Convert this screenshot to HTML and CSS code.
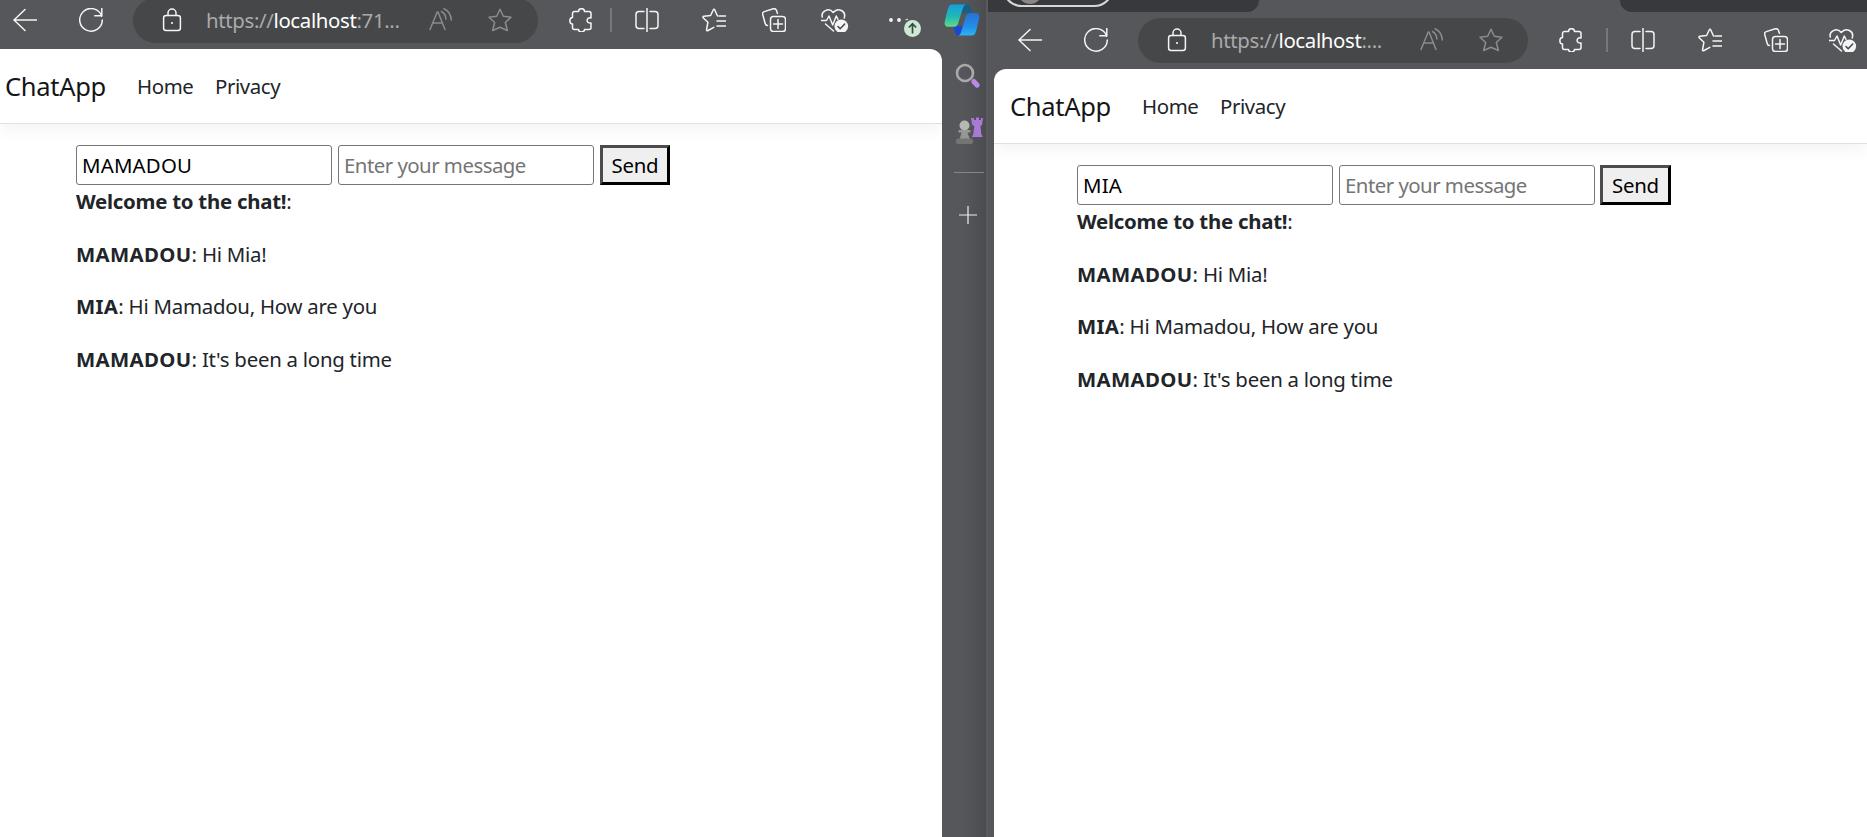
FILE: index.html
```
<!DOCTYPE html>
<html lang="en">
<head>
<meta charset="utf-8">
<title>ChatApp</title>
<link rel="stylesheet" href="styles.css">
</head>
<body>
<svg class="defs" aria-hidden="true">
  <symbol id="back" viewBox="0 0 24 24"><path d="M24 12H.8M12 1.500 1 12l11 10.500"/></symbol>
  <symbol id="reload" viewBox="0 0 24 24"><path d="M22.700 8.200A11.300 11.300 0 1 0 23.300 12M22.800.5v7.200h-7"/></symbol>
  <symbol id="lock" viewBox="0 0 24 24"><rect x="3.600" y="7.500" width="16.800" height="15" rx="2.500"/><path d="M8 7.500V5a4 4 0 0 1 8 0v2.500"/><circle cx="12" cy="15" r="1.100" class="solid"/></symbol>
  <symbol id="read" viewBox="0 0 24 24"><path d="M1 21.500 8.200 4h.8l7 17.500M4 15h9.500M12.500 3.500c2.500 1.300 4.200 4 4.400 7.500M15 .8c4.300 1.800 7 6 7.300 11.200"/></symbol>
  <symbol id="star" viewBox="0 0 24 24"><path d="m12 1.200 3.300 7.100 7.700.9-5.700 5.300 2.100 8-7.400-3.300-7.400 3.300 2.100-8L1 9.200l7.700-.9z"/></symbol>
  <symbol id="puzzle" viewBox="0 0 24 24"><path d="M3.500 7V5.500a2 2 0 0 1 2-2h4C9.500-.2 15.500-.2 15.500 3.500h4.500a2 2 0 0 1 2 2V10c-5.200-1.200-5.200 6 0 5v4.500a2 2 0 0 1-2 2h-4.500c0 3.200-6 3.200-6 0h-4a2 2 0 0 1-2-2V16C0 16 0 9.500 3.500 9.500z"/></symbol>
  <symbol id="split" viewBox="0 0 24 24"><path d="M12 0v24M9 3.500H4a3 3 0 0 0-3 3v11a3 3 0 0 0 3 3h5M15 3.500h5a3 3 0 0 1 3 3v11a3 3 0 0 1-3 3h-5"/></symbol>
  <symbol id="favs" viewBox="0 0 24 24"><path d="M15.500 8 12.800 2c-.4-.9-1.200-.9-1.600 0L8.600 7.500l-6.700.8c-1 .1-1.300 1-.5 1.700l4.500 4.300-1.300 7.200c-.2 1 .5 1.500 1.400 1l5.800-3.200M17 8h7M15 13h9M15 18h9"/></symbol>
  <symbol id="collect" viewBox="0 0 24 24"><rect x="8.500" y="8.500" width="15" height="15" rx="3"/><path d="M16 11.500v9M11.500 16h9M5.500 17.500c-1.500 0-2-.6-2.300-2L.7 6.500C.3 5 1 4 2.300 3.600l9-2.800c1.300-.4 2.600.2 3.100 1.500l1 3"/></symbol>
  <symbol id="heart" viewBox="0 0 28 24"><path d="M1.300 9C-.3 3.500 7.500-1.200 12.200 4.500 17-1.200 25.500 3 23.200 10M.2 12.500h5.300l2.500-4.500 3.700 9 3.600-9 1.700 3.500M4.500 16l8 7"/><circle cx="20.300" cy="18.300" r="6.800" class="solid"/><path d="m17 18.500 2.200 2.200 4.500-4.600" class="tick"/></symbol>
</svg>

<div class="desktop">
  <section class="window window-left">
    <header class="toolbar">
      <svg class="icon"><use href="#back"/></svg>
      <svg class="icon reload"><use href="#reload"/></svg>
      <div class="address">
        <svg class="icon"><use href="#lock"/></svg>
        <span class="url">https://<b>localhost</b>:71...</span>
        <svg class="icon dim"><use href="#read"/></svg>
        <svg class="icon dim star"><use href="#star"/></svg>
      </div>
      <svg class="icon puzzle"><use href="#puzzle"/></svg>
      <i class="rule"></i>
      <svg class="icon split"><use href="#split"/></svg>
      <svg class="icon favs"><use href="#favs"/></svg>
      <svg class="icon collect"><use href="#collect"/></svg>
      <svg class="icon heart"><use href="#heart"/></svg>
      <svg class="more" viewBox="0 0 32 28"><circle cx="2" cy="12" r="1.900" class="solid"/><circle cx="10" cy="12" r="1.900" class="solid"/><path d="M16 12.200q1.500-2.200 3.200-1.200l-.9 1z" class="solid"/><circle cx="23.500" cy="20.500" r="8.500" class="badge"/><path d="M23.500 25.500V16M19.800 19.500l3.700-3.800 3.700 3.800" class="badge-arrow"/></svg>
    </header>
    <main class="page">
      <nav class="navbar"><a class="brand">ChatApp</a><a class="link home">Home</a><a class="link privacy">Privacy</a></nav>
      <div class="chat">
        <form class="row"><input class="field" type="text" value="MAMADOU"><input class="field" type="text" placeholder="Enter your message"><button class="send" type="button">Send</button></form>
        <p><strong class="welcome">Welcome to the chat!</strong>:</p>
        <p><strong>MAMADOU</strong>: Hi Mia!</p>
        <p><strong>MIA</strong>: Hi Mamadou, How are you</p>
        <p><strong>MAMADOU</strong>: It's been a long time</p>
      </div>
    </main>
  </section>

  <aside class="sidebar">
    <svg class="copilot" viewBox="0 0 36 33">
      <defs>
        <linearGradient id="cp1" x1="0" y1="0" x2="0" y2="1"><stop offset="0" stop-color="#149fe0"/><stop offset=".55" stop-color="#22b9b0"/><stop offset="1" stop-color="#63d98b"/></linearGradient>
        <linearGradient id="cp2" x1="0" y1="0" x2="0" y2="1"><stop offset="0" stop-color="#2670d6"/><stop offset=".6" stop-color="#258de8"/><stop offset="1" stop-color="#27b5f2"/></linearGradient>
      </defs>
      <path d="M20 .5h3.500q2.500 0 3.500 3l1.500 5.500h-7q-2.500 0-4 3z" fill="#155f88"/>
      <path d="M9 23h10l-2 6q-1 3.500-3 3.500-2 0-3-3z" fill="#1747d4"/>
      <path d="M8 .5h15q-3 0-4.200 4L14 20q-1 3.500-5 3.500H4Q-1.200 23.500.4 17L3.500 5Q4.700.5 8 .5z" fill="url(#cp1)"/>
      <path d="M28 32.500H13q3 0 4.200-4L22 13q1-3.800 5-3.800h5q5 0 3.600 6L32.500 28q-1.200 4.500-4.500 4.500z" fill="url(#cp2)"/>
    </svg>
    <svg class="search" viewBox="0 0 26 26"><path d="m17 17 4 4" stroke="#77747a" stroke-width="2"/><circle cx="10" cy="10" r="8" fill="none" stroke="#aaa9aa" stroke-width="2.600"/><path d="m18.800 18.500 3.400 3.700" stroke="#b98ae6" stroke-width="5" stroke-linecap="round"/></svg>
    <svg class="games" viewBox="0 0 28 28">
      <path d="M16 1h3v2h2V.5h3V3h2V1h2l-1 7-1.500 1 .8 8 1.500 3h-11l1.500-3 1-8-2-1z" fill="#a87ad5"/>
      <circle cx="9.500" cy="8.500" r="5" fill="#b7b7b5"/><path d="M3.500 13h12v2.500h-3l2.500 7H4.500l2-7h-3z" fill="#979796"/><rect x="1" y="21.500" width="17" height="5.500" rx="2" fill="#747473"/>
    </svg>
    <i class="side-rule"></i>
    <svg class="plus" viewBox="0 0 18 18"><path d="M9 0v18M0 9h18"/></svg>
  </aside>

  <section class="window window-right">
    <div class="tabs">
      <div class="tab-area first"><div class="profile"><i class="avatar"></i></div></div>
      <div class="tab-area last"></div>
    </div>
    <header class="toolbar">
      <svg class="icon"><use href="#back"/></svg>
      <svg class="icon reload"><use href="#reload"/></svg>
      <div class="address">
        <svg class="icon"><use href="#lock"/></svg>
        <span class="url">https://<b>localhost</b>:...</span>
        <svg class="icon dim"><use href="#read"/></svg>
        <svg class="icon dim star"><use href="#star"/></svg>
      </div>
      <svg class="icon puzzle"><use href="#puzzle"/></svg>
      <i class="rule"></i>
      <svg class="icon split"><use href="#split"/></svg>
      <svg class="icon favs"><use href="#favs"/></svg>
      <svg class="icon collect"><use href="#collect"/></svg>
      <svg class="icon heart"><use href="#heart"/></svg>
    </header>
    <main class="page">
      <nav class="navbar"><a class="brand">ChatApp</a><a class="link home">Home</a><a class="link privacy">Privacy</a></nav>
      <div class="chat">
        <form class="row"><input class="field" type="text" value="MIA"><input class="field" type="text" placeholder="Enter your message"><button class="send" type="button">Send</button></form>
        <p><strong class="welcome">Welcome to the chat!</strong>:</p>
        <p><strong>MAMADOU</strong>: Hi Mia!</p>
        <p><strong>MIA</strong>: Hi Mamadou, How are you</p>
        <p><strong>MAMADOU</strong>: It's been a long time</p>
      </div>
    </main>
  </section>
</div>
</body>
</html>
```
FILE: styles.css
```
* { box-sizing: border-box; }
body {
  margin: 0;
  overflow: hidden;
  background: #56575b;
  color: #212529;
  font: 20.4px/31.5px "Noto Sans", "Open Sans", sans-serif;
  letter-spacing: -0.25px;
}
.defs { position: absolute; width: 0; height: 0; }
.desktop { display: flex; width: 1867px; height: 837px; overflow: hidden; }
.window { display: flex; flex-direction: column; flex: none; overflow: hidden; }
.window-left { width: 942px; }
.window-right { width: 879px; }

/* Browser chrome */
svg { flex: none; display: block; overflow: visible; }
.toolbar { display: flex; align-items: center; flex: none; color: #f5f5f5; }
.window-left .toolbar { height: 49px; padding: 0 0 9px 13px; }
.window-right .toolbar { height: 57px; padding: 0 0 1px 30px; }
.icon { width: 24px; height: 24px; fill: none; stroke: currentColor; stroke-width: 1.5; stroke-linejoin: round; stroke-linecap: round; }
.solid { fill: #f5f5f5; stroke: none; }
.tick { stroke: #444549; stroke-width: 1.5; }
.dim { color: #8b8c8e; }
.reload { margin-left: 42px; }
.address {
  display: flex;
  align-items: center;
  flex: none;
  height: 45px;
  margin-left: 30px;
  border-radius: 23px;
  background: #464749;
}
.window-left .address { width: 405px; padding: 0 26px 0 27px; }
.window-right .address { width: 390px; padding: 0 25px 0 27px; }
.url { flex: 1; margin-left: 22px; padding-top: 2px; color: #a9aaab; letter-spacing: -0.35px; white-space: nowrap; }
.url b { color: #fff; font-weight: 400; }
.star { margin-left: 35px; }
.puzzle { margin-left: 31px; }
.rule { flex: none; width: 2px; height: 24px; margin-left: 17px; background: #77787b; }
.window-right .rule { margin-left: 23px; }
.split { margin-left: 23px; }
.favs { margin-left: 43px; }
.collect { margin-left: 36px; }
.window-right .collect { margin-left: 42px; }
.heart { width: 28px; margin-left: 35px; }
.window-right .heart { margin-left: 41px; }
.more { width: 32px; height: 28px; margin: 4px 0 0 40px; }
.badge { fill: #cfe9d6; }
.badge-arrow { fill: none; stroke: #34503d; stroke-width: 1.7; }

.tabs { display: flex; justify-content: space-between; flex: none; height: 12px; }
.tab-area { height: 12px; background: #38393c; overflow: hidden; }
.tab-area.first { width: 271px; border-bottom-right-radius: 12px; }
.tab-area.last { width: 247px; border-bottom-left-radius: 12px; }
.profile { width: 112px; height: 40px; margin: -33px 0 0 14px; padding: 11px 0 0 14px; border: 2px solid #d6d6d6; border-radius: 20px; }
.avatar { display: block; width: 24px; height: 24px; border-radius: 50%; background: #8a8681; }

/* Edge sidebar */
.sidebar {
  display: flex;
  flex-direction: column;
  align-items: center;
  flex: none;
  width: 46px;
  padding-top: 4px;
  border-right: 2px solid #5b5b5c;
  background: linear-gradient(90deg, #56575b 50%, #4b4c50);
}
.copilot { width: 36px; height: 32px; margin-left: -4px; }
.search { width: 26px; height: 26px; margin: 27px 0 0 8px; }
.games { width: 28px; height: 28px; margin: 28px 0 0 9px; }
.side-rule { flex: none; width: 30px; height: 1px; margin: 27px 0 0 10px; background: #858688; }
.plus { width: 18px; height: 18px; margin: 33px 0 0 8px; stroke: #eee; stroke-width: 1.2; }

/* Chat page */
.page { flex: 1; overflow: hidden; background: #fff; }
.window-left .page { border-top-right-radius: 12px; }
.window-right .page { margin-left: 6px; border-top-left-radius: 12px; }
.navbar {
  display: flex;
  align-items: center;
  height: 75px;
  padding-top: 2px;
  border-bottom: 1px solid #dee0e2;
  box-shadow: 0 5px 16px rgba(0, 0, 0, .05);
}
.window-left .navbar { padding-left: 5px; }
.window-right .navbar { padding-left: 16px; }
.brand { width: 132px; color: #151515; font-size: 25.5px; letter-spacing: -0.3px; }
.link { width: 78px; letter-spacing: -0.4px; }
.chat { padding: 20px 0 0 76px; }
.window-right .chat { padding-left: 83px; }
.row { display: flex; height: 40px; margin: 1px 0; }
.field {
  width: 256px;
  height: 40px;
  margin: 0 6px 0 0;
  padding: 1px 5px;
  border: 1px solid #767676;
  border-radius: 3px;
  background: #fff;
  color: #000;
  font: inherit;
  letter-spacing: 0.2px;
}
.field::placeholder { color: #757575; letter-spacing: -0.52px; }
.send {
  width: 70px;
  height: 40px;
  padding: 1px 0 0;
  border: 3px solid;
  border-color: #4c4c4c #000 #000 #4c4c4c;
  background: #efefef;
  color: #000;
  font: inherit;
  letter-spacing: inherit;
}
.window-right .send { width: 71px; margin-left: -1px; }
p { margin: 0 0 21px; }
strong { font-weight: 700; letter-spacing: 0.35px; }
.welcome { letter-spacing: -0.25px; }
```
